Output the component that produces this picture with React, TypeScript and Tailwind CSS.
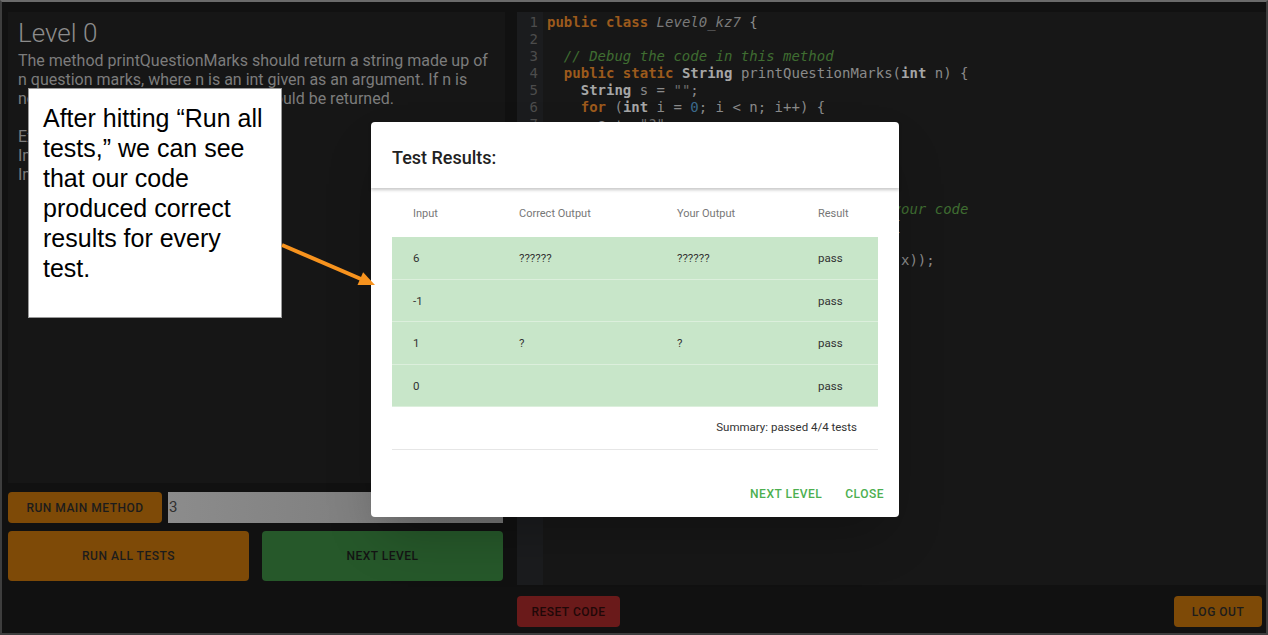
import type { ReactNode } from "react"

interface RowProps {
  input: string
  correct: string
  yours: string
  result: string
}

const K = ({ children }: { children: ReactNode }) => (
  <span className="text-[#9c5a1c] font-bold">{children}</span>
)
const T = ({ children }: { children: ReactNode }) => (
  <span className="text-[#a6a6a6] font-bold">{children}</span>
)
const C = ({ children }: { children: ReactNode }) => (
  <span className="text-[#3f6d31] italic">{children}</span>
)
const S = ({ children }: { children: ReactNode }) => (
  <span className="text-[#6e6e6e]">{children}</span>
)
const N = ({ children }: { children: ReactNode }) => (
  <span className="text-[#3c6a8c]">{children}</span>
)

const codeLines: ReactNode[] = [
  <><K>public class</K> <span className="italic text-[#7a7a7a]">Level0_kz7</span> {"{"}</>,
  <></>,
  <>{"  "}<C>// Debug the code in this method</C></>,
  <>{"  "}<K>public static</K> <T>String</T> printQuestionMarks(<T>int</T> n) {"{"}</>,
  <>{"    "}<T>String</T> s = <S>""</S>;</>,
  <>{"    "}<K>for</K> (<T>int</T> i = <N>0</N>; i &lt; n; i++) {"{"}</>,
  <>{"      "}s += <S>"?"</S>;</>,
  <>{"    }"}</>,
  <>{"    "}<K>return</K> s;</>,
  <>{"  }"}</>,
  <></>,
  <>{"  "}<C>// You can use the main method to test your code</C></>,
  <>{"  "}<K>public static</K> <T>void</T> main(<T>String</T>[] args) {"{"}</>,
  <>{"    "}<T>int</T> x = Integer.parseInt(args[<N>0</N>]);</>,
  <>{"    "}System.out.println(printQuestionMarks(x));</>,
  <>{"  }"}</>,
  <>{"}"}</>,
]

const rows: RowProps[] = [
  { input: "6", correct: "??????", yours: "??????", result: "pass" },
  { input: "-1", correct: "", yours: "", result: "pass" },
  { input: "1", correct: "?", yours: "?", result: "pass" },
  { input: "0", correct: "", yours: "", result: "pass" },
]

const ResultRow = ({ input, correct, yours, result }: RowProps) => {
  return (
    <div className="grid grid-cols-[106px_158px_141px_1fr] items-center h-[42.5px] pl-[21px] pt-[2px] bg-[#c8e6c9] border-b border-[#dcefdc] text-[11.5px] text-[#333]">
      <div>{input}</div>
      <div>{correct}</div>
      <div>{yours}</div>
      <div>{result}</div>
    </div>
  )
}

export default function App() {
  return (
    <div className="relative w-[1268px] h-[635px] overflow-hidden bg-[#111111] border-2 border-[#3e3e3e] border-t-[#6a6a6a] font-['Roboto',sans-serif]">
      <div className="flex gap-[12px] pl-[6px] pt-[10px]">
        {/* left side */}
        <div className="w-[497px] flex flex-col">
          <div className="h-[471px] bg-[#161616] px-[10px] pt-[6px]">
            <h1 className="text-[26px] leading-[30px] font-light text-[#8c8c8c]">Level 0</h1>
            <p className="mt-[3px] text-[16px] leading-[19px] text-[#7c7c7c]">
              The method printQuestionMarks should return a string made up of<br />
              n question marks, where n is an int given as an argument. If n is<br />
              not a positive int, an empty string should be returned.<br />
              <br />
              Example:<br />
              Input: 3, Output: "???"<br />
              Input: -1, Output: ""
            </p>
          </div>
          <div className="mt-[9px] h-[31px] flex gap-[6px] pr-[2px]">
            <button className="w-[154px] rounded-[4px] bg-[#7e4a07] text-[12px] font-medium tracking-[0.5px] text-[#1c1c1c]">
              RUN MAIN METHOD
            </button>
            <input
              className="flex-1 min-w-0 bg-gradient-to-r from-[#8c8c8c] to-[#767676] text-[15px] text-[#303030] px-[1px] outline-none"
              defaultValue="3"
            />
          </div>
          <div className="mt-[8px] h-[50px] flex gap-[13px] pr-[2px]">
            <button className="flex-1 rounded-[4px] bg-[#7e4a07] text-[12px] font-medium tracking-[0.5px] text-[#1c1c1c]">
              RUN ALL TESTS
            </button>
            <button className="flex-1 rounded-[4px] bg-[#26582a] text-[12px] font-medium tracking-[0.5px] text-[#141414]">
              NEXT LEVEL
            </button>
          </div>
        </div>

        {/* right side */}
        <div className="flex-1 flex flex-col">
          <div className="h-[573px] flex bg-[#171717] font-['DejaVu_Sans_Mono',monospace] text-[14px] leading-[17px]">
            <div className="w-[26px] bg-[#1b1c1e] pt-[2px] pr-[5px] text-right text-[#4c4c4c]">
              {codeLines.map((_, i) => (
                <div key={i}>{i + 1}</div>
              ))}
            </div>
            <div className="flex-1 pt-[2px] pl-[4px] text-[#8a8a8a] whitespace-pre">
              {codeLines.map((line, i) => (
                <div key={i} className="h-[17px]">{line}</div>
              ))}
            </div>
          </div>
          <div className="mt-[11px] h-[31px] flex justify-between pr-[4px]">
            <button className="w-[103px] rounded-[4px] bg-[#6a1a1a] text-[12px] font-medium tracking-[0.5px] text-[#1f0808]">
              RESET CODE
            </button>
            <button className="w-[88px] rounded-[4px] bg-[#7e4a07] text-[12px] font-medium tracking-[0.5px] text-[#1c1c1c]">
              LOG OUT
            </button>
          </div>
        </div>
      </div>

      {/* test results dialog */}
      <div className="absolute left-[369px] top-[120px] w-[528px] h-[395px] bg-white rounded-[4px] shadow-2xl flex flex-col">
        <div className="relative h-[66px] px-[21px] pt-[4px] flex items-center shadow-[0_2px_3px_rgba(0,0,0,0.22)]">
          <h2 className="text-[18px] font-medium text-[#222]">Test Results:</h2>
        </div>
        <div className="px-[21px]">
          <div className="grid grid-cols-[106px_158px_141px_1fr] items-center h-[49px] pl-[21px] pt-[3px] text-[11px] text-[#777]">
            <div>Input</div>
            <div>Correct Output</div>
            <div>Your Output</div>
            <div>Result</div>
          </div>
          {rows.map(r => (
            <ResultRow key={r.input} {...r} />
          ))}
          <div className="h-[42px] flex items-center justify-end pr-[21px] text-[11.5px] text-[#333]">
            Summary: passed 4/4 tests
          </div>
          <div className="border-t border-[#e6e6e6]" />
        </div>
        <div className="flex justify-end gap-[23px] pt-[36px] pr-[15px]">
          <button className="text-[12px] leading-[16px] font-medium tracking-[0.5px] text-[#4caf50]">NEXT LEVEL</button>
          <button className="text-[12px] leading-[16px] font-medium tracking-[0.5px] text-[#4caf50]">CLOSE</button>
        </div>
      </div>

      {/* annotation */}
      <div className="absolute left-[26px] top-[86px] w-[254px] h-[230px] bg-white border border-[#9a9a9a] pl-[14px] pt-[14px] font-['Liberation_Sans',Arial,sans-serif] text-[25px] leading-[30px] text-black">
        After hitting “Run all<br />
        tests,” we can see<br />
        that our code<br />
        produced correct<br />
        results for every<br />
        test.
      </div>
      <svg className="absolute left-[276px] top-[236px]" width="100" height="52" viewBox="0 0 100 52">
        <line x1="4" y1="7" x2="83" y2="41" stroke="#f7931e" strokeWidth="4" />
        <polygon points="97,47 79.5,47.1 85.1,34.3" fill="#f7931e" />
      </svg>
    </div>
  )
}
